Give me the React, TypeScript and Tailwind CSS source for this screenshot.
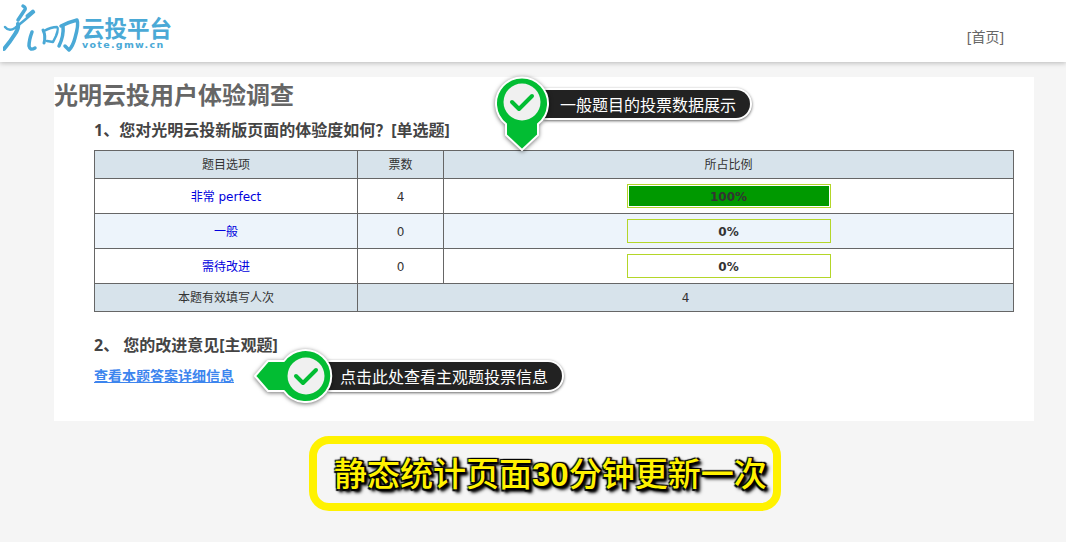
const bodyFont = "font-['DejaVu_Sans','Noto_Sans_CJK_SC',sans-serif]";
const headFont = "font-['Noto_Sans','Noto_Sans_CJK_SC',sans-serif]";

const options = [
  { name: '非常 perfect', votes: 4, percent: 100, rowBg: 'bg-white' },
  { name: '一般', votes: 0, percent: 0, rowBg: 'bg-[#edf4fb]' },
  { name: '需待改进', votes: 0, percent: 0, rowBg: 'bg-white' },
];

const Logo = () => (
  <div className="flex items-start">
    <svg width="79" height="54" viewBox="0 0 79 54" fill="none" stroke="#4aa9d6" strokeLinecap="round" strokeLinejoin="round">
      <path d="M20 6 Q24 8 21 11 L15 20" strokeWidth="3.5" />
      <path d="M30 11 L24 16" strokeWidth="3" />
      <path d="M2 27 Q6 32 12 28 Q22 20 31 12" strokeWidth="2.5" />
      <path d="M15 24 Q16 28 12 34 Q7 42 1 49" strokeWidth="4" />
      <path d="M29 32 Q26 40 26 46 Q27 51 32 48" strokeWidth="3.5" />
      <path d="M40 30 Q43 36 41 43" strokeWidth="3" />
      <path d="M41 31 Q48 27 54 27 Q56 28 53 36 L50 42 L44 41" strokeWidth="2.5" />
      <path d="M60 26 Q61 36 56 46" strokeWidth="3.5" />
      <path d="M58 26 Q66 22 74 20 Q76 24 72 38 Q70 46 66 50 L62 46" strokeWidth="3.5" />
    </svg>
    <div className="mt-[14px] flex flex-col">
      <span className="whitespace-nowrap font-['Noto_Sans_CJK_SC',sans-serif] text-[22.5px] font-bold leading-[26px] text-[#4aa9d6]">
        云投平台
      </span>
      <span className="font-['DejaVu_Sans',sans-serif] text-[9.5px] font-bold leading-[10px] tracking-[1.3px] text-[#4aa9d6]">
        vote.gmw.cn
      </span>
    </div>
  </div>
);

const Check = () => (
  <>
    <circle cx="30" cy="30" r="18.5" fill="#f0f0f0" />
    <path d="M20 30 L27 37 L40 24" fill="none" stroke="#02bd33" strokeWidth="4" strokeLinecap="round" strokeLinejoin="round" />
  </>
);

// round badge with a point at the bottom
const PinDown = () => (
  <svg className="block drop-shadow-[0_1px_2px_rgba(0,0,0,0.55)]" width="60" height="82" viewBox="0 0 60 82">
    <path
      d="M14 52 A26 26 0 1 1 46 52 V63 L30 78 L14 63 Z"
      fill="#02bd33"
      stroke="#ffffff"
      strokeWidth="2"
      strokeLinejoin="round"
    />
    <Check />
  </svg>
);

// round badge with a point at the left
const PinLeft = () => (
  <svg className="block drop-shadow-[0_1px_2px_rgba(0,0,0,0.55)]" width="82" height="60" viewBox="-22 0 82 60">
    <path
      d="M8 15 A26 26 0 1 1 8 45 H-8 L-21 30 L-8 15 Z"
      fill="#02bd33"
      stroke="#ffffff"
      strokeWidth="2"
      strokeLinejoin="round"
    />
    <Check />
  </svg>
);

const Pill = ({ children, className }: { children: string; className: string }) => (
  <div
    className={`flex h-[32px] items-center whitespace-nowrap rounded-r-[16px] border-2 border-l-0 border-white bg-[#222222] font-['Noto_Sans_CJK_SC',sans-serif] text-[16px] text-white shadow-[0_1px_3px_rgba(0,0,0,0.6)] ${className}`}
  >
    {children}
  </div>
);

export default function App() {
  return (
    <div className={`relative min-h-[542px] bg-[#f5f5f5] ${bodyFont}`}>
      <header className="flex h-[62px] items-start justify-between bg-white pl-[3px] pr-[62px] shadow-[0_1px_5px_rgba(0,0,0,0.25)]">
        <Logo />
        <a className={`mt-[28px] text-[14px] leading-[18px] text-[#666666] ${headFont}`}>[首页]</a>
      </header>

      <main className="ml-[54px] mt-[15px] h-[344px] w-[980px] bg-white">
        <h1 className="h-[37px] pt-[1px] text-[24px] font-bold leading-[37px] text-[#666666]">光明云投用户体验调查</h1>

        <section className="px-[40px]">
          <h2 className={`h-[36px] pt-[4px] text-[16px] font-bold leading-[24px] text-[#444444] ${headFont}`}>
            1、您对光明云投新版页面的体验度如何？[单选题]
          </h2>
          <table className="w-[920px] table-fixed border-collapse text-center text-[12px] text-[#333333]">
            <colgroup>
              <col className="w-[263px]" />
              <col className="w-[86px]" />
              <col />
            </colgroup>
            <thead>
              <tr className="h-[28px] bg-[#d7e3eb]">
                <th className="border border-[#666666] font-normal">题目选项</th>
                <th className="border border-[#666666] font-normal">票数</th>
                <th className="border border-[#666666] font-normal">所占比例</th>
              </tr>
            </thead>
            <tbody>
              {options.map((option) => (
                <tr key={option.name} className={`h-[35px] ${option.rowBg}`}>
                  <td className="border border-[#666666] pt-[2px] text-[#0000dd]">{option.name}</td>
                  <td className="border border-[#666666] pt-[2px]">{option.votes}</td>
                  <td className="border border-[#666666]">
                    <div className="relative mx-auto h-[24px] w-[204px] border border-[#b4d629] p-[1px]">
                      {option.percent > 0 && <div className="h-full bg-[#009900]" style={{ width: `${option.percent}%` }} />}
                      <span className="absolute inset-0 pt-[1px] text-[12px] font-bold leading-[23px]">{option.percent}%</span>
                    </div>
                  </td>
                </tr>
              ))}
              <tr className="h-[28px] bg-[#d7e3eb]">
                <td className="border border-[#666666]">本题有效填写人次</td>
                <td colSpan={2} className="border border-[#666666]">4</td>
              </tr>
            </tbody>
          </table>

          <h2 className={`mt-[20px] h-[26px] text-[16px] font-bold leading-[26px] text-[#444444] ${headFont}`}>2、 您的改进意见[主观题]</h2>
          <a className="mt-[8px] block w-fit text-[14px] font-bold leading-[20px] text-[#3d85ee] underline">查看本题答案详细信息</a>
        </section>
      </main>

      {/* tooltip over the first question */}
      <div className="absolute left-[492px] top-[72px] flex items-start">
        <div className="relative z-10">
          <PinDown />
        </div>
        <Pill className="ml-[-8px] mt-[16px] w-[208px] pl-[16px]">一般题目的投票数据展示</Pill>
      </div>

      {/* tooltip over the second question */}
      <div className="absolute left-[254px] top-[346px] flex items-start">
        <div className="relative z-10">
          <PinLeft />
        </div>
        <Pill className="ml-[-8px] mt-[14px] w-[236px] pl-[12px]">点击此处查看主观题投票信息</Pill>
      </div>

      <div className="absolute left-[309px] top-[436px] flex h-[75px] w-[472px] items-center rounded-[20px] border-[8px] border-[#fff200] pl-[17px]">
        <span className="whitespace-nowrap font-['Noto_Sans_CJK_SC',sans-serif] text-[33px] font-medium leading-[40px] text-[#fff200] [text-shadow:2px_2px_2px_#000,-1px_-1px_1px_#000,2px_-1px_1px_#000,-1px_2px_1px_#000,3px_3px_3px_#000,3px_3px_4px_#000]">
          静态统计页面<span className="font-['Liberation_Sans',sans-serif] font-bold">30</span>分钟更新一次
        </span>
      </div>
    </div>
  );
}
